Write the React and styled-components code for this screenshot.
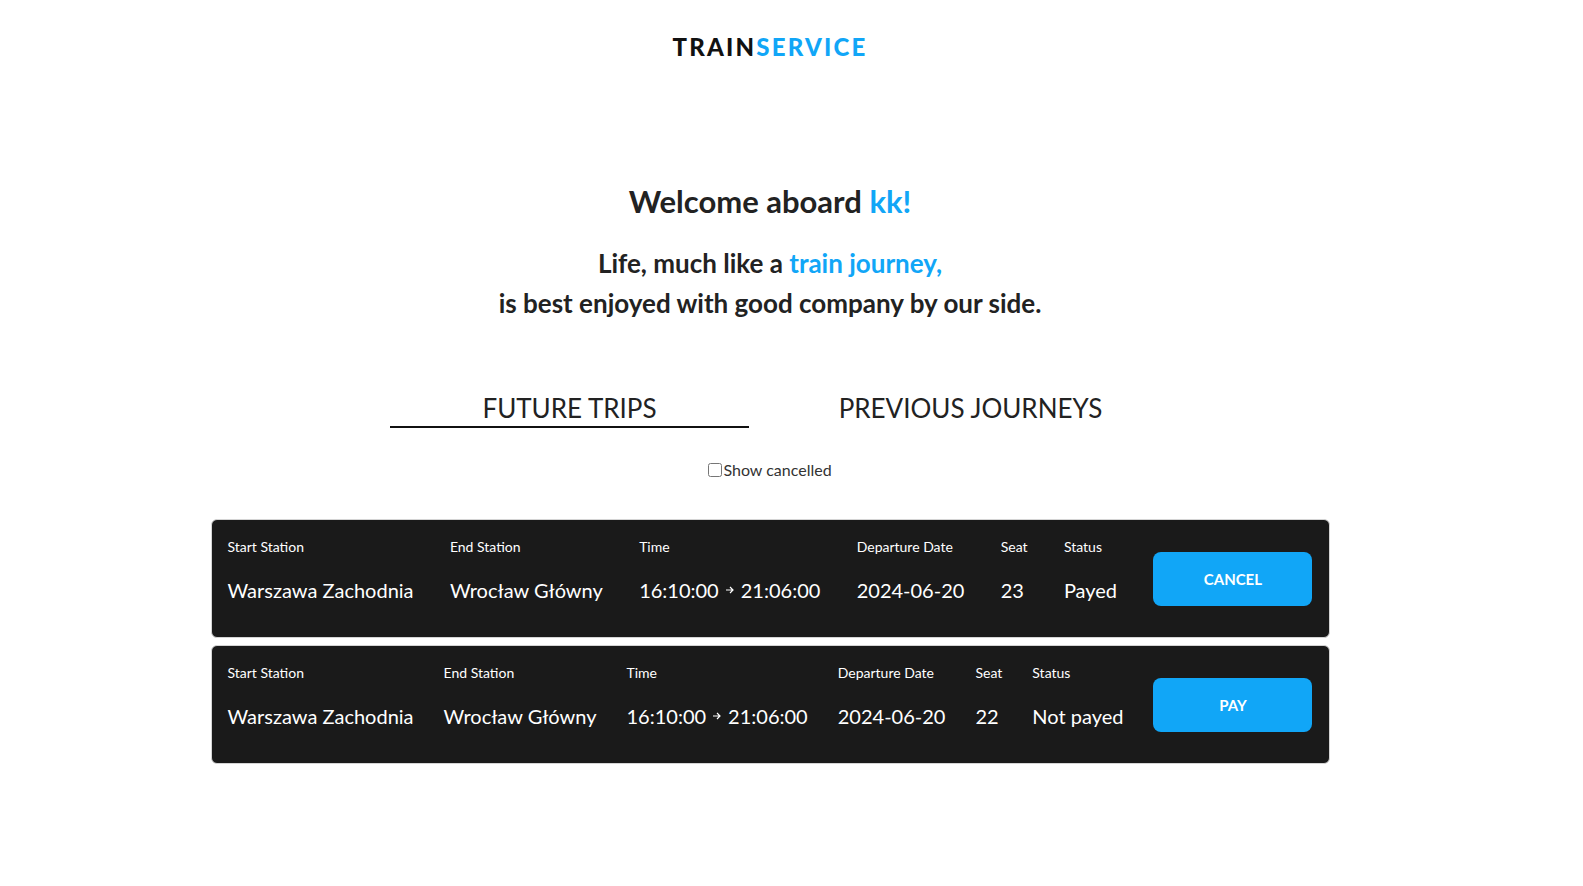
import React, { useState } from "react";
import styled, { createGlobalStyle } from "styled-components";

const GlobalStyle = createGlobalStyle`
  body {
    margin: 0;
    background: #ffffff;
    font-family: Lato, "Noto Sans", sans-serif;
    color: #222222;
  }
`;

const BLUE = "#11a6f7";

const Page = styled.div`
  width: 1540px;
  display: flex;
  flex-direction: column;
  align-items: center;
`;

const Logo = styled.div`
  margin-top: 32px;
  font-size: 24px;
  line-height: 30px;
  font-weight: 900;
  letter-spacing: 2.2px;
  color: #111111;
`;

const Blue = styled.span`
  color: ${BLUE};
`;

const Welcome = styled.h1`
  margin: 121px 0 0;
  font-size: 31px;
  line-height: 36px;
  font-weight: 700;
  color: #222222;
`;

const Quote = styled.p`
  margin: 24px 0 0;
  font-size: 26px;
  line-height: 40px;
  font-weight: 700;
  text-align: center;
  color: #222222;
`;

const Tabs = styled.div`
  margin-top: 69px;
  display: flex;
  gap: 42px;
`;

const Tab = styled.button`
  width: 359px;
  padding: 0 0 2px;
  background: none;
  border: none;
  border-bottom: 2px solid ${(p) => (p.$active ? "#111111" : "transparent")};
  font-family: Lato, sans-serif;
  font-size: 26px;
  line-height: 32px;
  font-weight: 400;
  color: #222222;
  cursor: pointer;
`;

const Filter = styled.label`
  margin-top: 32px;
  display: flex;
  align-items: center;
  font-size: 16px;
  line-height: 20px;
  color: #333333;
  input {
    width: 14px;
    height: 14px;
    margin: 0 1px 0 0;
  }
`;

const List = styled.div`
  margin-top: 39px;
  display: flex;
  flex-direction: column;
  gap: 7px;
`;

const Card = styled.div`
  box-sizing: border-box;
  width: 1119px;
  height: 119px;
  padding: 0 16px;
  display: flex;
  align-items: center;
  justify-content: space-between;
  background: #1a1a1a;
  border: 1.5px solid #d4d4d4;
  border-radius: 6px;
  color: #ffffff;
`;

const Field = styled.div`
  display: flex;
  flex-direction: column;
  gap: 23px;
  margin-bottom: 17px;
`;

const Label = styled.span`
  font-size: 14px;
  line-height: 17px;
  white-space: nowrap;
`;

const Value = styled.span`
  font-size: 20px;
  line-height: 24px;
  white-space: nowrap;
  display: flex;
  align-items: center;
  gap: 6px;
`;

const Action = styled.button`
  width: 159px;
  height: 54px;
  border: none;
  border-radius: 8px;
  background: ${BLUE};
  color: #ffffff;
  font-family: Lato, sans-serif;
  font-size: 15px;
  font-weight: 700;
  text-transform: uppercase;
  cursor: pointer;
`;

const Arrow = () => (
  <svg width="10" height="10" viewBox="0 0 10 10">
    <path d="M1 5h7M5 2l3 3-3 3" stroke="#fff" strokeWidth="1.2" fill="none" />
  </svg>
);

const trips = [
  {
    from: "Warszawa Zachodnia",
    to: "Wrocław Główny",
    dep: "16:10:00",
    arr: "21:06:00",
    date: "2024-06-20",
    seat: 23,
    status: "Payed",
    action: "Cancel",
  },
  {
    from: "Warszawa Zachodnia",
    to: "Wrocław Główny",
    dep: "16:10:00",
    arr: "21:06:00",
    date: "2024-06-20",
    seat: 22,
    status: "Not payed",
    action: "Pay",
  },
];

const TripCard = ({ trip }) => (
  <Card>
    <Field>
      <Label>Start Station</Label>
      <Value>{trip.from}</Value>
    </Field>
    <Field>
      <Label>End Station</Label>
      <Value>{trip.to}</Value>
    </Field>
    <Field>
      <Label>Time</Label>
      <Value>
        {trip.dep} <Arrow /> {trip.arr}
      </Value>
    </Field>
    <Field>
      <Label>Departure Date</Label>
      <Value>{trip.date}</Value>
    </Field>
    <Field>
      <Label>Seat</Label>
      <Value>{trip.seat}</Value>
    </Field>
    <Field>
      <Label>Status</Label>
      <Value>{trip.status}</Value>
    </Field>
    <Action>{trip.action}</Action>
  </Card>
);

const App = () => {
  const [tab, setTab] = useState("future");
  const [showCancelled, setShowCancelled] = useState(false);

  return (
    <Page>
      <GlobalStyle />
      <Logo>
        TRAIN<Blue>SERVICE</Blue>
      </Logo>
      <Welcome>
        Welcome aboard <Blue>kk!</Blue>
      </Welcome>
      <Quote>
        Life, much like a <Blue>train journey,</Blue>
        <br />
        is best enjoyed with good company by our side.
      </Quote>
      <Tabs>
        <Tab $active={tab === "future"} onClick={() => setTab("future")}>
          FUTURE TRIPS
        </Tab>
        <Tab $active={tab === "previous"} onClick={() => setTab("previous")}>
          PREVIOUS JOURNEYS
        </Tab>
      </Tabs>
      <Filter>
        <input
          type="checkbox"
          checked={showCancelled}
          onChange={(e) => setShowCancelled(e.target.checked)}
        />
        Show cancelled
      </Filter>
      <List>
        {trips.map((trip, i) => (
          <TripCard key={i} trip={trip} />
        ))}
      </List>
    </Page>
  );
};

export default App;
